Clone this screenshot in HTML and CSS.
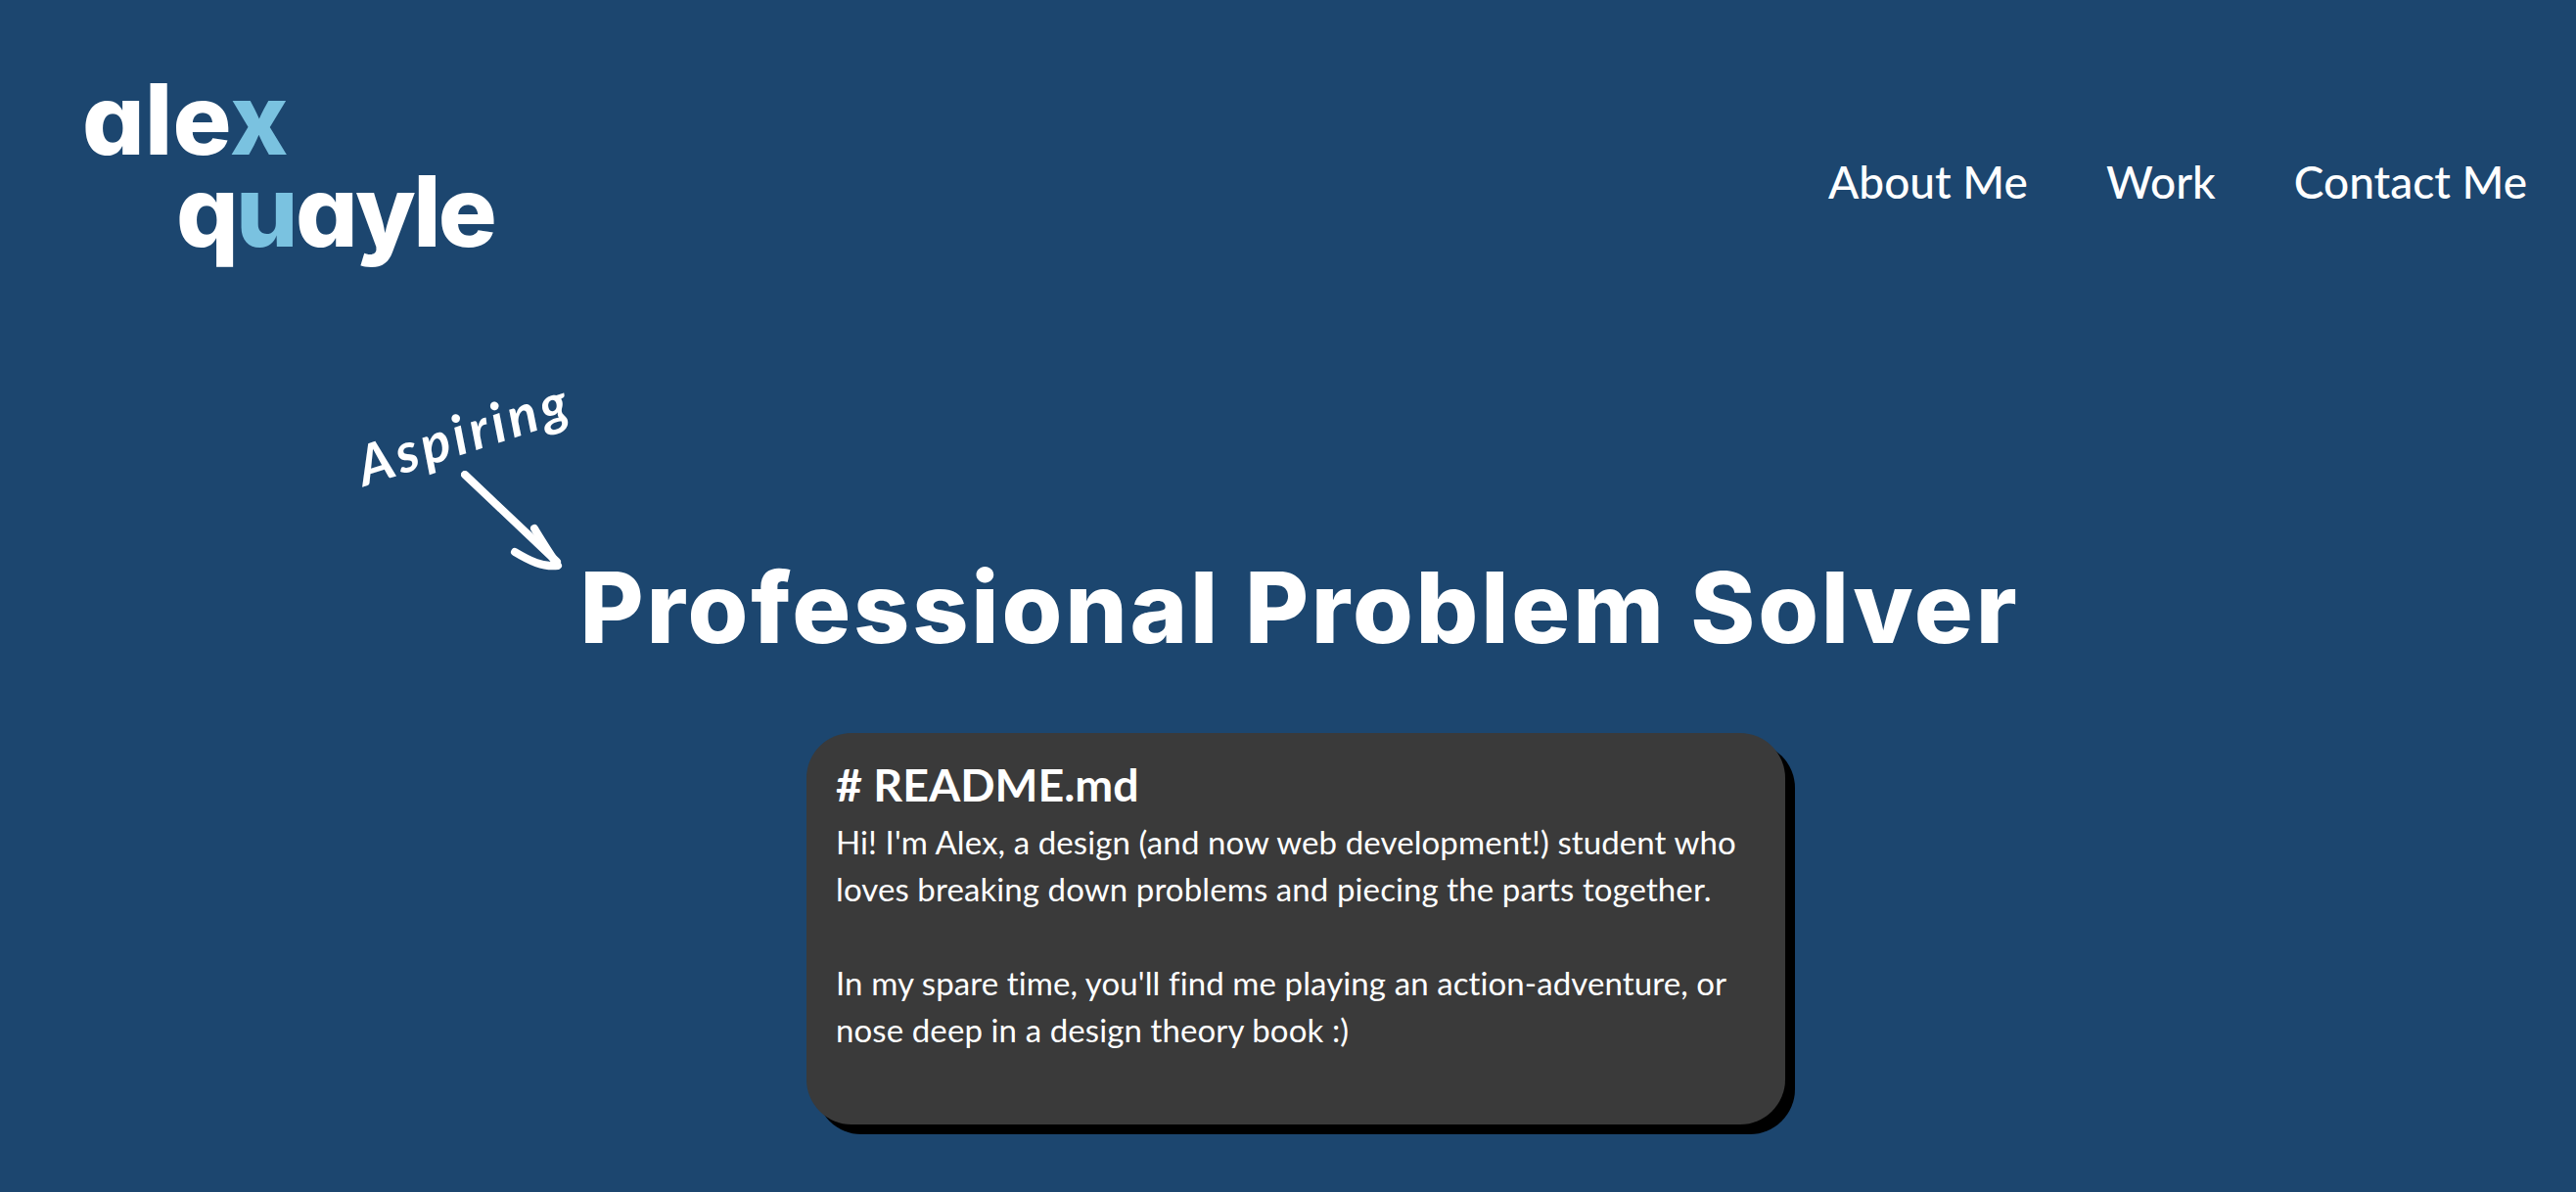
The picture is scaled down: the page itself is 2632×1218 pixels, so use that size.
FILE: index.html
```html
<!DOCTYPE html>
<html lang="en">
<head>
  <meta charset="UTF-8">
  <meta name="viewport" content="width=device-width, initial-scale=1.0">
  <title>Alex Quayle</title>
  <link rel="stylesheet" href="styles.css">
</head>
<body>
  <!-- Logo and navigation -->
  <header class="site-header">
    <a class="logo" href="#">
      <span class="logo-line">ale<span class="logo-accent">x</span></span>
      <span class="logo-line logo-line-second">q<span class="logo-accent">u</span>ayle</span>
    </a>
    <nav class="site-nav">
      <a href="#">About Me</a>
      <a href="#">Work</a>
      <a href="#">Contact Me</a>
    </nav>
  </header>

  <main class="hero">
    <div class="title-wrap">
      <span class="aspiring">Aspiring</span>
      <svg class="arrow" viewBox="0 0 120 120" width="120" height="120" aria-hidden="true">
        <path d="M4 4 L98 93" fill="none" stroke="#fff" stroke-width="8" stroke-linecap="round"/>
        <path d="M75 59 C82 71 90 83 99 97 C84 99 70 92 55 83" fill="none" stroke="#fff" stroke-width="8" stroke-linecap="round" stroke-linejoin="round"/>
      </svg>
      <h1 class="title">Professional Problem Solver</h1>
    </div>

    <!-- README card -->
    <section class="readme">
      <h2># README.md</h2>
      <p>Hi! I'm Alex, a design (and now web development!) student who loves breaking down problems and piecing the parts together.</p>
      <p>In my spare time, you'll find me playing an action-adventure, or nose deep in a design theory book :)</p>
    </section>
  </main>
</body>
</html>
```

FILE: styles.css
```css
html, body {
  margin: 0;
  height: 100%;
}

body {
  background-color: #1c466f;
  color: #fff;
  font-family: Lato, "Noto Sans", sans-serif;
  overflow: hidden;
}

a {
  color: inherit;
  text-decoration: none;
}

/* Header */
.site-header {
  display: flex;
  justify-content: space-between;
  align-items: center;
  padding: 75px 50px 0 84px;
}

.logo {
  display: flex;
  flex-direction: column;
  font-family: Inter, sans-serif;
  font-size: 100px;
  font-weight: 800;
  line-height: 94px;
  letter-spacing: 0.25px;
  font-feature-settings: "cv11" 1;
}

.logo-line-second {
  padding-left: 96px;
  letter-spacing: -2.7px;
}

.logo-accent {
  color: #7ac2e0;
}

.site-nav {
  display: flex;
  gap: 80px;
  padding-top: 33px;
  font-size: 46px;
  font-weight: 500;
}

/* Hero */
.hero {
  display: flex;
  flex-direction: column;
  align-items: center;
  padding: 300px 0 0 16px;
}

.title-wrap {
  position: relative;
  margin-left: 8px;
}

.title {
  margin: 0;
  font-family: Inter, sans-serif;
  font-size: 100px;
  font-weight: 800;
  line-height: 116px;
  letter-spacing: 2.8px;
  white-space: nowrap;
}

.aspiring {
  position: absolute;
  left: -233px;
  top: -155px;
  font-size: 56px;
  font-style: italic;
  font-weight: 700;
  letter-spacing: 4px;
  transform: rotate(-18deg);
}

.arrow {
  position: absolute;
  left: -122px;
  top: -82px;
}

/* README card */
.readme {
  box-sizing: border-box;
  width: 1000px;
  height: 400px;
  margin-top: 70px;
  padding: 24px 30px;
  background-color: #3a3a3a;
  border-radius: 46px;
  box-shadow: 10px 10px 0 #000;
}

.readme h2 {
  margin: 0 0 7px;
  font-size: 46.5px;
  font-weight: 700;
  line-height: 56px;
}

.readme p {
  margin: 0 0 48px;
  font-size: 33px;
  line-height: 48px;
  letter-spacing: 0.1px;
}
```
